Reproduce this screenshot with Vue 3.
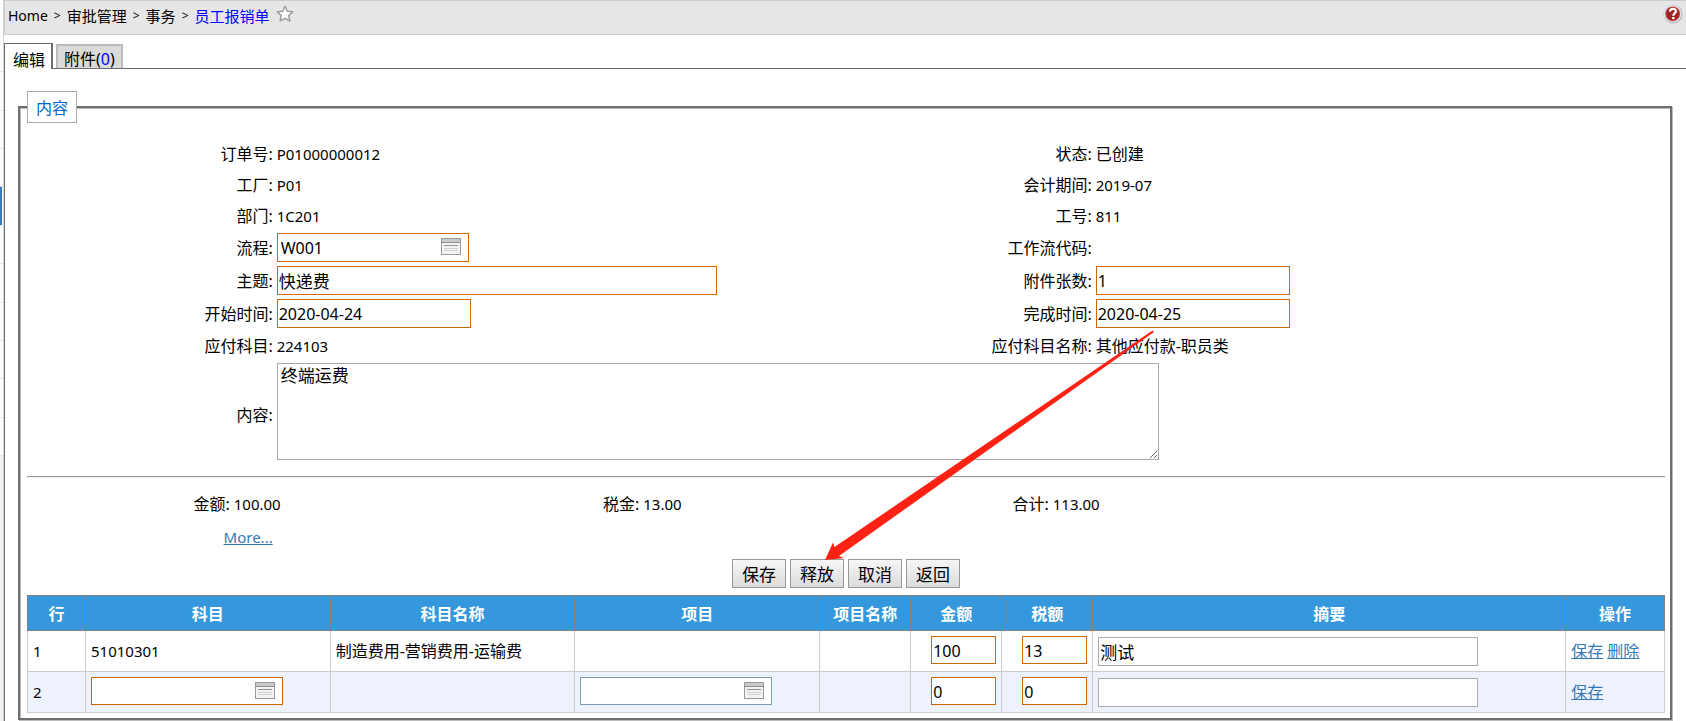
<script setup>
import { ref, reactive } from 'vue'

const crumbs = ['Home', '审批管理', '事务']

const form = reactive({
  flow: 'W001',
  subject: '快递费',
  start: '2020-04-24',
  attachments: '1',
  finish: '2020-04-25',
  content: '终端运费',
})

const totals = [
  { label: '金额:', value: '100.00' },
  { label: '税金:', value: '13.00' },
  { label: '合计:', value: '113.00' },
]

const actions = ['保存', '释放', '取消', '返回']
const headers = ['行', '科目', '科目名称', '项目', '项目名称', '金额', '税额', '摘要', '操作']

const first = reactive({ amount: '100', tax: '13', note: '测试' })
const second = reactive({ account: '', project: '', amount: '0', tax: '0', note: '' })
const menuRows = 11
const activeRow = ref(5)
</script>

<template>
  <div class="page">
    <aside class="rail">
      <div class="rail-list">
        <div v-for="n in menuRows" :key="n" class="rail-row" :class="{ active: n === activeRow }"></div>
      </div>
    </aside>

    <div class="main">
      <header class="topbar">
        <nav class="crumbs">
          <template v-for="(c, i) in crumbs" :key="c">
            <span :class="{ latin: i === 0 }">{{ c }}</span>
            <span class="sep">&gt;</span>
          </template>
          <a href="#" class="current">员工报销单</a>
          <svg class="star" viewBox="0 0 18 18" width="18" height="18" aria-hidden="true">
            <path d="M9 1.2 11.3 6.3 16.8 6.9 12.7 10.5 13.9 16 9 13.3 4.1 16 5.3 10.5 1.2 6.9 6.7 6.3Z" fill="#fff" stroke="#999" stroke-width="1.4" stroke-linejoin="round" />
          </svg>
        </nav>
        <button class="help" type="button" aria-label="帮助">
          <svg viewBox="0 0 20 20" width="20" height="20">
            <circle cx="10" cy="10" r="9.6" fill="#b4b9c2" />
            <circle cx="9.6" cy="9.6" r="9" fill="#dfe1e8" />
            <circle cx="9.7" cy="9.8" r="7.4" fill="#c9403f" />
            <circle cx="9.7" cy="9.8" r="6.4" fill="#9c2424" />
            <path d="M6.8 7.6C7 5.500 8.400 4.800 9.900 4.800c1.700 0 3 .9 3 2.500 0 2-2.600 2.100-2.600 4.400" fill="none" stroke="#fff" stroke-width="2.2" />
            <rect x="9.2" y="13" width="2.3" height="2.2" fill="#fff" />
          </svg>
        </button>
      </header>

      <div class="tabs">
        <button type="button" class="tab on">编辑</button>
        <button type="button" class="tab">附件(<span class="count">0</span>)</button>
      </div>

      <div class="body">
        <fieldset class="panel">
          <legend>内容</legend>

          <div class="form">
            <span class="lab">订单号:</span><span class="val num">P01000000012</span>
            <span class="lab">状态:</span><span class="val">已创建</span>

            <span class="lab">工厂:</span><span class="val num">P01</span>
            <span class="lab">会计期间:</span><span class="val num">2019-07</span>

            <span class="lab">部门:</span><span class="val num">1C201</span>
            <span class="lab">工号:</span><span class="val num">811</span>

            <label class="lab" for="flow">流程:</label>
            <span class="val tall">
              <span class="picker">
                <input id="flow" v-model="form.flow" class="box req" type="text" />
                <button type="button" class="pick" aria-label="选择流程">
                  <svg viewBox="0 0 20 17" width="20" height="17">
                    <rect x=".5" y=".5" width="19" height="16" fill="#f3f3f3" stroke="#999" />
                    <rect x="1" y="1" width="18" height="3" fill="#c9cacd" />
                    <path d="M0 4.5H20M3 7.5H17" stroke="#8f9094" />
                    <path d="M3 10.5H17M3 12.5H17" stroke="#d2d2d2" />
                  </svg>
                </button>
              </span>
            </span>
            <span class="lab">工作流代码:</span><span class="val"></span>

            <label class="lab" for="subject">主题:</label>
            <span class="val tall"><input id="subject" v-model="form.subject" class="box req han wide" type="text" /></span>
            <label class="lab" for="attachments">附件张数:</label>
            <span class="val"><input id="attachments" v-model="form.attachments" class="box req" type="text" /></span>

            <label class="lab" for="start">开始时间:</label>
            <span class="val tall"><input id="start" v-model="form.start" class="box req" type="text" /></span>
            <label class="lab" for="finish">完成时间:</label>
            <span class="val"><input id="finish" v-model="form.finish" class="box req" type="text" /></span>

            <span class="lab">应付科目:</span><span class="val num">224103</span>
            <span class="lab">应付科目名称:</span><span class="val">其他应付款-职员类</span>

            <label class="lab area-lab" for="content">内容:</label>
            <span class="val full"><textarea id="content" v-model="form.content"></textarea></span>
          </div>

          <hr />

          <div class="totals">
            <div v-for="t in totals" :key="t.label" class="total">
              <span class="total-lab">{{ t.label }}</span>
              <span class="num">{{ t.value }}</span>
            </div>
          </div>
          <div class="more"><a href="#" class="num">More...</a></div>

          <div class="actions">
            <button v-for="a in actions" :key="a" type="button">{{ a }}</button>
          </div>

          <table>
            <colgroup>
              <col class="c-row" /><col class="c-wide" /><col class="c-wide" /><col class="c-wide" />
              <col class="c-num" /><col class="c-num" /><col class="c-num" /><col class="c-note" /><col />
            </colgroup>
            <thead>
              <tr><th v-for="h in headers" :key="h">{{ h }}</th></tr>
            </thead>
            <tbody>
              <tr>
                <td class="num">1</td>
                <td class="num">51010301</td>
                <td>制造费用-营销费用-运输费</td>
                <td></td>
                <td></td>
                <td class="right"><input v-model="first.amount" class="box req small" type="text" aria-label="第1行金额" /></td>
                <td class="right"><input v-model="first.tax" class="box req small" type="text" aria-label="第1行税额" /></td>
                <td><input v-model="first.note" class="box han note" type="text" aria-label="第1行摘要" /></td>
                <td class="links"><a href="#">保存</a><a href="#">删除</a></td>
              </tr>
              <tr class="alt">
                <td class="num">2</td>
                <td>
                  <span class="picker">
                    <input v-model="second.account" class="box req" type="text" aria-label="第2行科目" />
                    <button type="button" class="pick" aria-label="选择科目">
                      <svg viewBox="0 0 20 17" width="20" height="17">
                        <rect x=".5" y=".5" width="19" height="16" fill="#f3f3f3" stroke="#999" />
                        <rect x="1" y="1" width="18" height="3" fill="#c9cacd" />
                        <path d="M0 4.5H20M3 7.5H17" stroke="#8f9094" />
                        <path d="M3 10.5H17M3 12.5H17" stroke="#d2d2d2" />
                      </svg>
                    </button>
                  </span>
                </td>
                <td></td>
                <td>
                  <span class="picker">
                    <input v-model="second.project" class="box soft" type="text" aria-label="第2行项目" />
                    <button type="button" class="pick" aria-label="选择项目">
                      <svg viewBox="0 0 20 17" width="20" height="17">
                        <rect x=".5" y=".5" width="19" height="16" fill="#f3f3f3" stroke="#999" />
                        <rect x="1" y="1" width="18" height="3" fill="#c9cacd" />
                        <path d="M0 4.5H20M3 7.5H17" stroke="#8f9094" />
                        <path d="M3 10.5H17M3 12.5H17" stroke="#d2d2d2" />
                      </svg>
                    </button>
                  </span>
                </td>
                <td></td>
                <td class="right"><input v-model="second.amount" class="box req small" type="text" aria-label="第2行金额" /></td>
                <td class="right"><input v-model="second.tax" class="box req small" type="text" aria-label="第2行税额" /></td>
                <td><input v-model="second.note" class="box han note" type="text" aria-label="第2行摘要" /></td>
                <td class="links"><a href="#">保存</a></td>
              </tr>
            </tbody>
          </table>
        </fieldset>
      </div>
    </div>

    <svg class="arrow" viewBox="0 0 330 232" width="330" height="232" aria-hidden="true">
      <path d="M0 230 8 212.500 9.500 217 327.500 .500 329 2 14 226 19 228Z" fill="#ff2214" />
    </svg>
  </div>
</template>

<style>
body {
  margin: 0;
  background: #fff;
}
</style>

<style scoped>
* {
  box-sizing: border-box;
}
.page {
  position: relative;
  display: flex;
  min-height: 100vh;
  overflow: hidden;
  font-family: "Noto Sans", "Noto Sans CJK SC", sans-serif;
  font-size: 16px;
  line-height: 24px;
  color: #000;
}
input,
textarea,
button {
  font-family: inherit;
  color: inherit;
  margin: 0;
}
.num {
  font-size: 15px;
}
a {
  color: #337ab7;
}

.rail {
  flex: none;
  width: 4px;
  background: #f0f0f0;
  border-right: 1px solid #d4d4d4;
}
.rail-list {
  display: grid;
  grid-auto-rows: 1fr;
  height: 456px;
  padding-top: 34px;
  background: #fcfcfc;
}
.rail-row {
  border-bottom: 1px solid #e2e2e2;
}
.rail-row.active {
  background: #337ab7;
  margin-right: 1px;
}

.main {
  flex: 1;
  min-width: 0;
  display: flex;
  flex-direction: column;
}
.topbar {
  display: flex;
  justify-content: space-between;
  align-items: flex-start;
  height: 35px;
  padding: 3px 3px 0;
  background: #e6e6e6;
  border: 1px solid #ccc;
  border-right: 0;
}
.crumbs {
  display: flex;
  align-items: center;
  gap: 6px;
  font-size: 15px;
}
.latin {
  font-size: 14px;
}
.sep {
  font-size: 12px;
}
.current {
  color: #00f;
  text-decoration: none;
}
.star {
  margin-bottom: 4px;
}
.help {
  display: block;
  padding: 0;
  border: 0;
  background: none;
  line-height: 0;
}

.tabs {
  display: flex;
  align-items: flex-end;
  gap: 3px;
  height: 34px;
  border-bottom: 1px solid #6e6e6e;
}
.tab {
  height: 24px;
  padding: 5px 6px 0;
  border: 2px solid #bbb;
  border-bottom: 0;
  background: #dadada;
  font-size: 16px;
  line-height: 17px;
}
.tab.on {
  height: 26px;
  margin-bottom: -1px;
  padding: 7px 6px 0 8px;
  border: 1px solid #6e6e6e;
  border-right-width: 2px;
  border-bottom: 0;
  background: #fff;
}
.count {
  color: #00f;
}

.body {
  flex: 1;
  padding: 22px 14px 0 13px;
  border-left: 1px solid #6e6e6e;
}
.panel {
  min-width: 0;
  margin: 0;
  padding: 15px 5px 5px 7px;
  border: 2px solid #6e6e6e;
  box-shadow: 1px 1px 0 #bbb, inset 1px 1px 0 #bbb;
}
legend {
  height: 32px;
  padding: 4px 8px 2px;
  border: 1px solid #aaa;
  background: #fff;
  color: #06c;
}

.form {
  display: grid;
  grid-template-columns: 15% 35% 15% 35%;
}
.lab {
  align-self: center;
  text-align: right;
}
.area-lab {
  padding-top: 8px;
}
.val {
  display: flex;
  align-items: center;
  min-height: 31px;
  padding-left: 4px;
}
.val.tall {
  min-height: 33px;
}
.val.full {
  grid-column: span 3;
  padding-top: 2px;
  padding-bottom: 1px;
}
.box {
  width: 194px;
  height: 29px;
  padding: 1px;
  border: 1px solid #aaa;
  background: #fff;
  font-size: 16px;
}
.box.req {
  border-color: #c60;
}
.box.soft {
  border-color: #7f9db9;
}
.box.han {
  font-size: 17px;
}
.box.wide {
  width: 440px;
}
.picker {
  position: relative;
  display: block;
  width: 192px;
}
.picker .box {
  display: block;
  width: 100%;
  padding: 1px 32px 1px 3px;
}
.pick {
  position: absolute;
  right: 8px;
  top: 5px;
  padding: 0;
  border: 0;
  background: none;
  line-height: 0;
}
textarea {
  display: block;
  width: 882px;
  height: 97px;
  padding: 0 3px;
  border: 1px solid #aaa;
  background: #fff;
  font-size: 17px;
  line-height: 24px;
}
hr {
  height: 2px;
  margin: 15px 0 14px;
  border: 0;
  border-top: 1px solid #999;
  border-bottom: 1px solid #eee;
}

.totals {
  display: grid;
  grid-template-columns: repeat(4, 1fr);
}
.total {
  display: grid;
  grid-template-columns: 1fr 1fr;
  column-gap: 4px;
  align-items: center;
}
.total-lab {
  text-align: right;
}
.more {
  width: 15%;
  margin-top: 9px;
  text-align: right;
}
.actions {
  display: flex;
  justify-content: center;
  gap: 4px;
  margin: 10px 0 7px;
}
.actions button {
  width: 54px;
  height: 29px;
  padding: 2px 0 0;
  border: 1px solid #999;
  background: linear-gradient(#f6f6f6, #dcdcdc);
  font-size: 17px;
  line-height: 24px;
}

table {
  width: 100%;
  table-layout: fixed;
  border-collapse: collapse;
}
.c-row {
  width: 58px;
}
.c-wide {
  width: 14.95%;
}
.c-num {
  width: 91px;
}
.c-note {
  width: 28.9%;
}
th {
  height: 35px;
  padding: 2px 0 0;
  border: 1px solid #808080;
  background: #3598dc;
  color: #fff;
  font-weight: 700;
}
td {
  height: 41px;
  padding: 5px;
  border: 1px solid #ccc;
}
.alt td {
  background: #eef2fc;
}
td .box {
  display: block;
  height: 28px;
}
td .picker {
  margin-bottom: 2px;
}
.right .box {
  margin-left: auto;
  margin-bottom: 2px;
  padding-top: 3px;
}
.box.small {
  width: 65px;
}
td .box.note {
  width: 380px;
  max-width: 100%;
  height: 29px;
}
.links a {
  margin-right: 4px;
}

.arrow {
  position: absolute;
  left: 825px;
  top: 330px;
  pointer-events: none;
}
</style>
